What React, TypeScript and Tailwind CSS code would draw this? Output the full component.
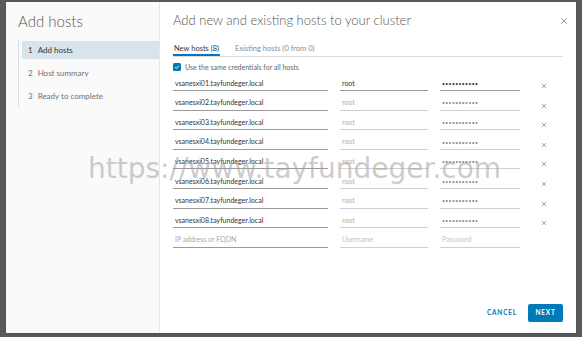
import React from 'react';

const HOSTS = [1, 2, 3, 4, 5, 6, 7, 8].map(n => `vsanesxi0${n}.tayfundeger.local`);

const STEPS = ['Add hosts', 'Host summary', 'Ready to complete'];

function Cross({ className }: { className?: string }) {
  return (
    <svg viewBox="0 0 10 10" className={className} fill="none" stroke="currentColor" strokeWidth="1.1">
      <path d="M1.5 1.5 L8.5 8.5 M8.5 1.5 L1.5 8.5" />
    </svg>
  );
}

function Dots({ dark }: { dark: boolean }) {
  return <span className={`text-[5px] tracking-[0.4px] ${dark ? 'text-[#333]' : 'text-[#8a8a8a]'}`}>•••••••••••</span>;
}

export default function App() {
  return (
    <div className="relative w-[582px] h-[337px] bg-[#5a5a5a] pt-[2px] pl-[6px] overflow-hidden" style={{ fontFamily: 'Lato, "Open Sans", sans-serif' }}>
      <div className="flex w-[570px] h-[331px] bg-white shadow">
        {/* wizard steps */}
        <div className="w-[154px] bg-[#fafafa] border-r border-[#e6e6e6] pt-[9px]">
          <h2 className="pl-[12px] text-[15px] font-light text-[#565656] leading-[20px]">Add hosts</h2>
          <div className="ml-[12px] mt-[8px] border-l border-[#dcdcdc] py-[2px] flex flex-col gap-[5px]">
            {STEPS.map((s, i) => (
              <div key={s} className={`ml-[3px] h-[18px] flex items-center pl-[6px] text-[8px] ${i === 0 ? 'bg-[#d9e4ea] text-[#333]' : 'text-[#707070]'}`}>
                <span className="mr-[5px]">{i + 1}</span>{s}
              </div>
            ))}
          </div>
        </div>

        {/* content */}
        <div className="flex-1 flex flex-col pl-[13px] pr-[13px] pt-[10px] pb-[11px]">
          <div className="flex items-center justify-between h-[18px]">
            <h1 className="text-[13px] font-light text-[#565656]">Add new and existing hosts to your cluster</h1>
            <Cross className="w-[8px] h-[8px] text-[#8a8a8a] mr-[-5px]" />
          </div>

          <div className="mt-[13px] flex border-b border-[#dcdcdc] text-[7.5px] h-[14px]">
            <div className="px-[1px] border-b-2 border-[#0079b8] text-[#333] leading-[12px]">New hosts (8)</div>
            <div className="ml-[15px] text-[#8c8c8c] leading-[12px]">Existing hosts (0 from 0)</div>
          </div>

          <div className="mt-[5px] flex items-center gap-[4px] text-[7px] text-[#666]">
            <span className="w-[8px] h-[8px] rounded-[1.5px] bg-[#0079b8] flex items-center justify-center">
              <svg viewBox="0 0 8 8" className="w-[6px] h-[6px]" fill="none" stroke="white" strokeWidth="1.3">
                <path d="M1.5 4.2 L3.3 5.8 L6.5 2.3" />
              </svg>
            </span>
            Use the same credentials for all hosts
          </div>

          <div className="mt-[4px] flex flex-col gap-[5px] text-[7px]">
            {HOSTS.map((h, i) => (
              <div key={h} className="flex items-end h-[14.6px]">
                <div className="w-[155px] border-b border-[#9a9a9a] pl-[2px] pb-[2px] text-[#333]">{h}</div>
                <div className={`ml-[12px] w-[88px] border-b pl-[2px] pb-[2px] ${i === 0 ? 'border-[#9a9a9a] text-[#333]' : 'border-[#cfcfcf] text-[#b0b0b0]'}`}>root</div>
                <div className={`ml-[12px] w-[80px] h-[12px] flex items-center border-b pl-[2px] ${i === 0 ? 'border-[#9a9a9a]' : 'border-[#cfcfcf]'}`}>
                  <Dots dark={i === 0} />
                </div>
                <Cross className="ml-[21px] mb-[2px] w-[6px] h-[6px] text-[#777]" />
              </div>
            ))}
            <div className="flex items-end h-[14.6px] text-[#a8a8a8]">
              <div className="w-[155px] border-b border-[#9a9a9a] pl-[2px] pb-[2px]">IP address or FQDN</div>
              <div className="ml-[12px] w-[88px] border-b border-[#cfcfcf] pl-[2px] pb-[2px] text-[#c4c4c4]">Username</div>
              <div className="ml-[12px] w-[80px] border-b border-[#cfcfcf] pl-[2px] pb-[2px] text-[#c4c4c4]">Password</div>
            </div>
          </div>

          <div className="mt-auto flex justify-end items-center gap-[10px]">
            <button className="px-[1px] text-[6.5px] font-bold tracking-[0.8px] text-[#0079b8]">CANCEL</button>
            <button className="w-[35px] h-[18px] rounded-[2px] bg-[#0079b8] text-white text-[6.5px] font-bold tracking-[0.8px]">NEXT</button>
          </div>
        </div>
      </div>

      {/* watermark */}
      <div className="absolute left-[88px] top-[152px] text-[28px] leading-[34px] text-[#a0a0a0]/55 pointer-events-none" style={{ fontFamily: '"DejaVu Sans", sans-serif' }}>
        https://www.tayfundeger.com
      </div>
    </div>
  );
}
